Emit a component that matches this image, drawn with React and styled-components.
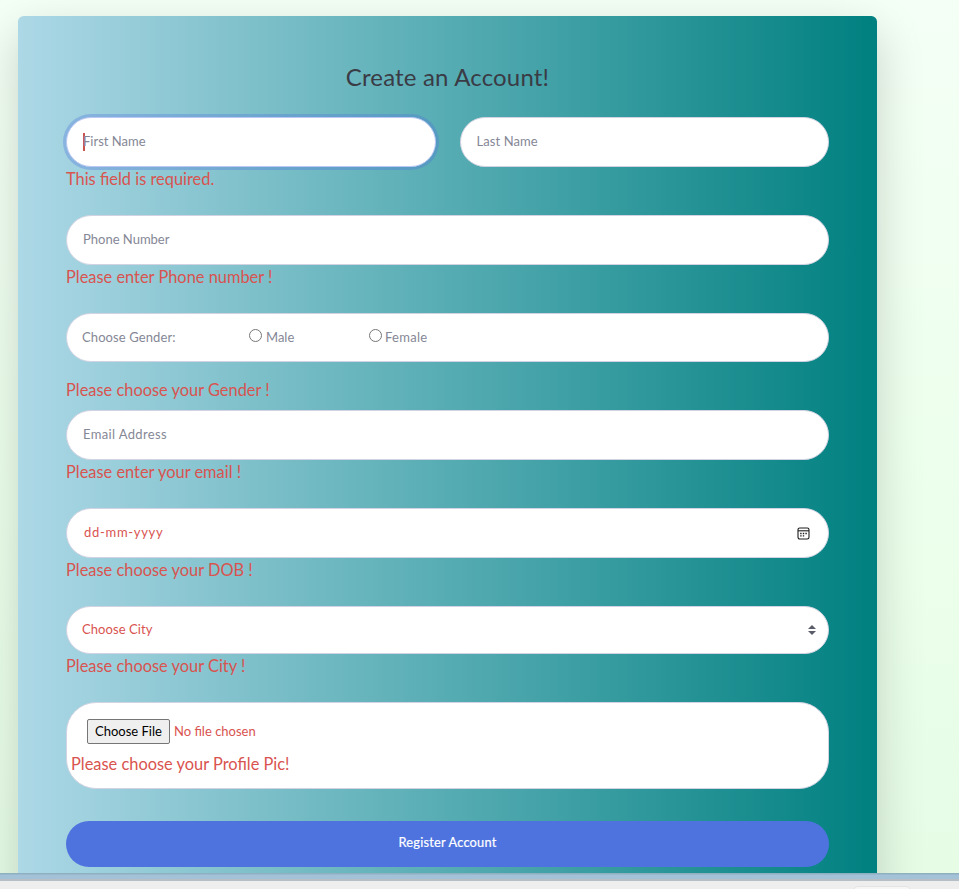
import React from "react";
import styled, { createGlobalStyle, css } from "styled-components";

const GlobalStyle = createGlobalStyle`
  *, *::before, *::after { box-sizing: border-box; }
  html, body { margin: 0; height: 100%; overflow: hidden; }
  body {
    font-family: Lato, "Open Sans", sans-serif;
    font-size: 16px;
    line-height: 24px;
    color: #858796;
  }
`;

const Screen = styled.div`
  display: flex;
  flex-direction: column;
  height: 889px;
  overflow: hidden;
`;

const Page = styled.main`
  flex: none;
  height: 873px;
  padding: 16px 82px 0 18px;
  overflow: hidden;
  background: linear-gradient(180deg, #f4fff5 0%, #ebffeb 65%, #e6fce5 100%);
`;

const Card = styled.section`
  height: 920px;
  padding: 46px 48px 0;
  border-radius: 5.6px;
  background: linear-gradient(90deg, #add8e6, #008080);
  box-shadow: 0 16px 48px rgba(0, 0, 0, 0.175);
`;

const Title = styled.h1`
  margin: 0 0 26px;
  height: 29px;
  font-size: 24px;
  line-height: 29px;
  font-weight: 400;
  letter-spacing: 0.17px;
  text-align: center;
  color: #3a3b45;
`;

const NameRow = styled.div`
  display: grid;
  grid-template-columns: 1fr 1fr;
  gap: 24px;
`;

const Group = styled.div`
  height: ${(p) => p.$height || 98}px;
`;

const Control = styled.div`
  display: flex;
  align-items: center;
  height: ${(p) => p.$height || 50}px;
  padding: 0 16px;
  border: 1px solid #d1d3e2;
  border-radius: 160px;
  background: #fff;
  font-size: 13px;
  line-height: 19px;
  color: ${(p) => (p.$invalid ? "#d9534f" : "#858796")};
  ${(p) =>
    p.$focused &&
    css`
      border-color: #bac8f3;
      box-shadow: 0 0 0 3px rgba(78, 115, 223, 0.33);
    `}
`;

const Label = styled.span`
  padding-bottom: ${(p) => (p.$level ? 0 : 1)}px;
  letter-spacing: ${(p) => (p.$track ? `${p.$track}px` : "normal")};
  white-space: pre;
`;

const Caret = styled.span`
  width: 2px;
  height: 18px;
  margin-right: -2px;
  background: #c9544f;
`;

const ErrorText = styled.div`
  margin-top: ${(p) => p.$drop || 0}px;
  height: 24px;
  font-size: 16.4px;
  line-height: 24px;
  color: #d9534f;
  white-space: pre;
`;

const GenderControl = styled(Control)`
  display: grid;
  grid-template-columns: 167px 120px 1fr;
  padding-left: 15px;
`;

const RadioOption = styled.label`
  display: flex;
  align-items: center;
  gap: ${(p) => p.$gap}px;
`;

const Radio = styled.input`
  appearance: none;
  width: 13px;
  height: 13px;
  margin: -4px 0 0;
  border: 1px solid #767676;
  border-radius: 50%;
  background: #fff;
`;

const SplitControl = styled(Control)`
  justify-content: space-between;
  padding-left: ${(p) => p.$left}px;
  padding-right: ${(p) => p.$right}px;
`;

const FileBox = styled.div`
  display: flex;
  flex-direction: column;
  height: 87px;
  margin-bottom: 32px;
  padding: 16px 4px 0;
  border: 1px solid #d1d3e2;
  border-radius: 30px;
  background: #fff;
`;

const FileRow = styled.div`
  display: flex;
  align-items: center;
  gap: 4px;
  height: 25px;
  margin-bottom: 8px;
  padding-left: 16px;
  font-size: 13px;
  line-height: 19px;
  color: #d9534f;
`;

const FileButton = styled.button`
  width: 83px;
  height: 25px;
  padding: 0 0 1px;
  border: 1px solid #767676;
  border-radius: 2px;
  background: #efefef;
  font: inherit;
  line-height: 19px;
  color: #000;
`;

const RegisterButton = styled.button`
  display: block;
  width: 100%;
  height: 46px;
  padding: 0 0 4px;
  border: 0;
  border-radius: 160px;
  background: #4e73df;
  font: inherit;
  font-size: 12.8px;
  letter-spacing: 0.2px;
  -webkit-text-stroke: 0.2px #fff;
  color: #fff;
`;

const WindowEdge = styled.div`
  flex: none;
  height: 8px;
  background: linear-gradient(180deg, #8fb0c0 0 1px, #99b8cb 1px 2px, #a3c1d7 2px 6px, #b7bec4 6px 8px);
`;

const StatusBar = styled.footer`
  display: flex;
  justify-content: flex-end;
  flex: 1;
  padding: 5px 48px 0 0;
  background: #eee;
`;

const StatusTab = styled.div`
  width: 58px;
  height: 12px;
  border: 1px solid #e4e4e4;
  border-radius: 5px;
  background: #f6f6f6;
`;

const CalendarIcon = () => (
  <svg width="13" height="13" viewBox="0 0 13 13" fill="none" stroke="#1c1c1c">
    <rect x="1" y="1" width="11" height="11" rx="1.7" strokeWidth="1.1" />
    <path d="M1 3.8h11" strokeWidth="1.1" />
    <path d="M5.8 6.5h1.4M8.4 6.5h1.4M3.2 8.9h1.4M5.8 8.9h1.4M3.2 6.5h1.4" strokeWidth="1.3" />
  </svg>
);

const SortIcon = () => (
  <svg width="8" height="10" viewBox="0 0 4 5" fill="#5a5c69">
    <path d="M2 0 0 2h4zm0 5L0 3h4z" />
  </svg>
);

export default function App() {
  return (
    <Screen>
      <GlobalStyle />
      <Page>
        <Card>
          <Title>Create an Account!</Title>
          <NameRow>
            <Group>
              <Control $focused>
                <Caret />
                <Label>First Name</Label>
              </Control>
              <ErrorText>This field is required.</ErrorText>
            </Group>
            <Group>
              <Control>
                <Label $track={0.08}>Last Name</Label>
              </Control>
            </Group>
          </NameRow>
          <Group>
            <Control>
              <Label>Phone Number</Label>
            </Control>
            <ErrorText>Please enter Phone number !</ErrorText>
          </Group>
          <Group $height={97}>
            <GenderControl $height={49}>
              <Label $level $track={0.1}>Choose Gender:</Label>
              <RadioOption $gap={4}>
                <Radio type="radio" name="gender" />
                <Label $level>Male</Label>
              </RadioOption>
              <RadioOption $gap={3}>
                <Radio type="radio" name="gender" />
                <Label $level $track={0.3}>Female</Label>
              </RadioOption>
            </GenderControl>
            <ErrorText $drop={16}>Please choose your Gender !</ErrorText>
          </Group>
          <Group>
            <Control>
              <Label $track={0.35}>Email Address</Label>
            </Control>
            <ErrorText>Please enter your email !</ErrorText>
          </Group>
          <Group>
            <SplitControl $invalid $left={17} $right={18}>
              <Label $track={0.7}>dd-mm-yyyy</Label>
              <CalendarIcon />
            </SplitControl>
            <ErrorText>Please choose your DOB !</ErrorText>
          </Group>
          <Group $height={96}>
            <SplitControl $invalid $height={48} $left={15} $right={12}>
              <Label $track={0.08}>Choose City</Label>
              <SortIcon />
            </SplitControl>
            <ErrorText>Please choose your City !</ErrorText>
          </Group>
          <FileBox>
            <FileRow>
              <FileButton>Choose File</FileButton>
              <Label>No file chosen</Label>
            </FileRow>
            <ErrorText>Please choose your Profile Pic!</ErrorText>
          </FileBox>
          <RegisterButton>Register Account</RegisterButton>
        </Card>
      </Page>
      <WindowEdge />
      <StatusBar>
        <StatusTab />
      </StatusBar>
    </Screen>
  );
}
